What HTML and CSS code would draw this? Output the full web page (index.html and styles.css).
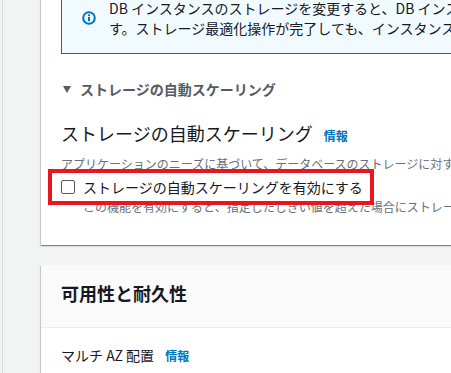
FILE: index.html
```html
<!DOCTYPE html>
<html lang="ja">
<head>
<meta charset="utf-8">
<link rel="stylesheet" href="styles.css">
</head>
<body>
<div class="app">
  <div class="rail"></div>
  <main class="main">
    <section class="card card-storage">
      <div class="alert">
        <svg class="alert-icon" width="14" height="14" viewBox="0 0 14 14">
          <circle cx="7" cy="7" r="5.8" fill="none" stroke="#0073bb" stroke-width="2"/>
          <rect x="6" y="6" width="2" height="4.2" fill="#0073bb"/>
          <rect x="6" y="3.4" width="2" height="1.8" fill="#0073bb"/>
        </svg>
        <div class="alert-text">
          <div class="line">DB インスタンスのストレージを変更すると、DB インスタンスのステータスがストレージの最適化に変わりま</div>
          <div class="line">す。ストレージ最適化操作が完了しても、インスタンスは引き続き使用できます。</div>
        </div>
      </div>

      <div class="expander">
        <span class="caret"></span>
        <span class="expander-label">ストレージの自動スケーリング</span>
      </div>

      <h2 class="field-title">ストレージの自動スケーリング <a class="info">情報</a></h2>
      <p class="desc">アプリケーションのニーズに基づいて、データベースのストレージに対する動的なスケーリングのサポートを提供します。</p>

      <label class="check-row">
        <span class="checkbox"></span>
        <span class="check-label">ストレージの自動スケーリングを有効にする</span>
        <span class="highlight"></span>
      </label>
      <p class="desc desc-indent">この機能を有効にすると、指定したしきい値を超えた場合にストレージを増やすことができます。</p>
    </section>

    <section class="card card-avail">
      <header class="card-header">可用性と耐久性</header>
      <div class="card-body">
        <div class="field-label">マルチ AZ 配置 <a class="info">情報</a></div>
      </div>
    </section>
  </main>
</div>
</body>
</html>
```

FILE: styles.css
```css
html, body {
  margin: 0;
  padding: 0;
}
body {
  background: #f2f3f3;
  font-family: "Noto Sans CJK JP", "Noto Sans", sans-serif;
  color: #16191f;
  overflow: hidden;
  width: 451px;
  height: 373px;
}
.app {
  display: flex;
  height: 373px;
}
.rail {
  width: 2px;
  flex: none;
  background: #f2f3f3;
  border-right: 1px solid #d5dbdb;
}
.main {
  flex: none;
  width: 700px;
  padding-left: 38px;
}
.card {
  background: #fff;
  box-shadow: 0 1px 1px 0 rgba(0, 28, 36, 0.3), 1px 1px 1px 0 rgba(0, 28, 36, 0.15), -1px 1px 1px 0 rgba(0, 28, 36, 0.15);
}
.card-storage {
  margin-top: -13px;
  padding: 0 0 30px 20px;
}
.alert {
  display: flex;
  gap: 13px;
  border: 1px solid #0073bb;
  background: #f1faff;
  padding: 10px 0 15px 20px;
}
.alert-icon {
  flex: none;
  margin-top: 13px;
}
.alert-text {
  font-size: 14px;
  line-height: 20px;
  white-space: nowrap;
}
.expander {
  display: flex;
  align-items: center;
  margin-top: 25px;
  height: 20px;
  font-size: 14px;
  font-weight: bold;
  color: #545b64;
}
.caret {
  width: 0;
  height: 0;
  border-left: 4px solid transparent;
  border-right: 4px solid transparent;
  border-top: 7px solid #545b64;
  margin-left: 2px;
  margin-right: 9px;
}
.field-title {
  margin: 22px 0 0;
  font-size: 18px;
  line-height: 24px;
  font-weight: normal;
  white-space: nowrap;
}
.info {
  color: #0073bb;
  font-size: 12px;
  font-weight: bold;
  margin-left: 7px;
  text-decoration: none;
}
.desc {
  margin: 8px 0 0;
  font-size: 12px;
  line-height: 16px;
  color: #687078;
  white-space: nowrap;
}
.desc-indent {
  margin-top: 2px;
  padding-left: 22px;
}
.check-row {
  position: relative;
  display: flex;
  align-items: center;
  gap: 8px;
  margin-top: 5px;
  height: 20px;
  font-size: 14px;
  white-space: nowrap;
}
.checkbox {
  width: 14px;
  height: 14px;
  box-sizing: border-box;
  border: 1px solid #545b64;
  border-radius: 2px;
  background: #fff;
}
.highlight {
  position: absolute;
  left: -13px;
  top: -8px;
  width: 326px;
  height: 36px;
  box-sizing: border-box;
  border: 4px solid #e8171f;
}
.card-avail {
  margin-top: 20px;
}
.card-header {
  background: #fafafa;
  border-bottom: 1px solid #eaeded;
  padding: 16px 0 22px 20px;
  font-size: 18px;
  line-height: 24px;
  font-weight: bold;
}
.card-body {
  padding: 17px 0 20px 20px;
}
.field-label {
  font-size: 14px;
  line-height: 20px;
}
.field-label .info {
  margin-left: 8px;
}
```
